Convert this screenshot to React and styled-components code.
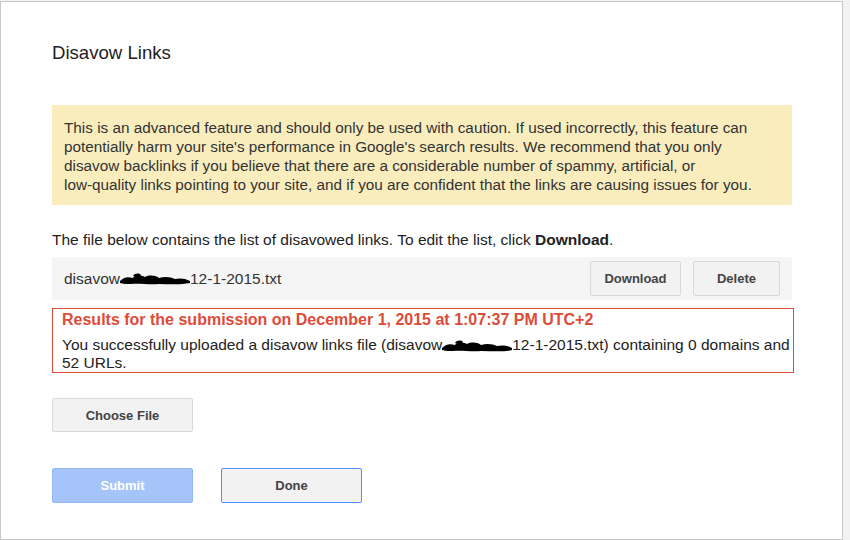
import styled, { createGlobalStyle } from "styled-components"

const GlobalStyle = createGlobalStyle`
  html, body {
    margin: 0;
    padding: 0;
    background: #f2f2f2;
    font-family: "Liberation Sans", Arial, sans-serif;
  }
`

const Page = styled.div`
  padding-top: 1px;
  width: 850px;
  height: 540px;
  overflow: hidden;
  box-sizing: border-box;
`

const Dialog = styled.div`
  width: 843px;
  height: 539px;
  box-sizing: border-box;
  background: #fff;
  border: 1px solid #c8c8c8;
  padding: 39px 50px 0 51px;
  color: #222;
`

const Title = styled.h2`
  margin: 0 0 40px;
  font-size: 18.6px;
  line-height: 24px;
  font-weight: normal;
  color: #222;
`

const Warning = styled.div`
  background: #f9edbe;
  padding: 13px 12px 11px;
  font-size: 15.3px;
  line-height: 19px;
  color: #333;
  white-space: nowrap;
`

const Intro = styled.p`
  margin: 25px 0 0;
  font-size: 15.5px;
  line-height: 19px;
  color: #222;
`

const FileRow = styled.div`
  display: flex;
  align-items: center;
  gap: 12px;
  height: 43px;
  margin-top: 8px;
  padding: 0 12px;
  background: #f5f5f5;
  font-size: 15.5px;
  color: #333;
`

const FileName = styled.span`
  flex: 1;
  display: flex;
  align-items: center;
`

const Button = styled.button`
  height: ${(p) => p.$h || 35}px;
  width: ${(p) => p.$w}px;
  padding: 0;
  box-sizing: border-box;
  border: 1px solid ${(p) => (p.$focus ? "#4d90fe" : "#d9d9d9")};
  border-radius: 2px;
  background: #f2f2f2;
  color: #444;
  font-family: "Liberation Sans", Arial, sans-serif;
  font-size: 13px;
  font-weight: bold;
`

const PrimaryButton = styled(Button)`
  background: #a5c5fa;
  border-color: #94b8f7;
  color: #fff;
`

const Results = styled.div`
  margin-top: 8px;
  margin-right: -2px;
  border: 1px solid #dd4b39;
  padding: 2px 9px 0;
  font-size: 15.5px;
  line-height: 18px;
  color: #222;
  white-space: nowrap;
`

const ResultsTitle = styled.div`
  color: #dd4b39;
  font-weight: bold;
  font-size: 16px;
  margin-bottom: 7px;
`

const Actions = styled.div`
  display: flex;
  gap: 28px;
  margin-top: ${(p) => p.$top}px;
`

function Blot() {
  return (
    <svg width="72" height="14" viewBox="0 0 72 14" style={{ margin: "0 -1px", verticalAlign: "middle" }}>
      <path
        d="M1 9 C6 4 10 5 14 6 C16 2 22 3 26 5 C30 3 36 3 40 6 C46 4 52 5 56 7 C60 6 66 6 71 9 L71 11 C62 13 50 12 40 12 C30 13 20 11 12 12 C8 12 4 12 1 11 Z M14 4 C16 1 20 1 22 3 L20 6 Z"
        fill="#000"
      />
    </svg>
  )
}

export default function App() {
  return (
    <>
      <GlobalStyle />
      <Page>
        <Dialog>
          <Title>Disavow Links</Title>
          <Warning>
            This is an advanced feature and should only be used with caution. If used incorrectly, this feature can
            <br />
            potentially harm your site's performance in Google's search results. We recommend that you only
            <br />
            disavow backlinks if you believe that there are a considerable number of spammy, artificial, or
            <br />
            low-quality links pointing to your site, and if you are confident that the links are causing issues for you.
          </Warning>
          <Intro>
            The file below contains the list of disavowed links. To edit the list, click <b>Download</b>.
          </Intro>
          <FileRow>
            <FileName>
              disavow<Blot />12-1-2015.txt
            </FileName>
            <Button $w={91}>Download</Button>
            <Button $w={87}>Delete</Button>
          </FileRow>
          <Results>
            <ResultsTitle>Results for the submission on December 1, 2015 at 1:07:37 PM UTC+2</ResultsTitle>
            You successfully uploaded a disavow links file (disavow<Blot />12-1-2015.txt) containing 0 domains and
            <br />
            52 URLs.
          </Results>
          <Actions $top={25}>
            <Button $w={141} $h={34}>Choose File</Button>
          </Actions>
          <Actions $top={36}>
            <PrimaryButton $w={141} $h={35}>Submit</PrimaryButton>
            <Button $w={141} $h={35} $focus>Done</Button>
          </Actions>
        </Dialog>
      </Page>
    </>
  )
}
